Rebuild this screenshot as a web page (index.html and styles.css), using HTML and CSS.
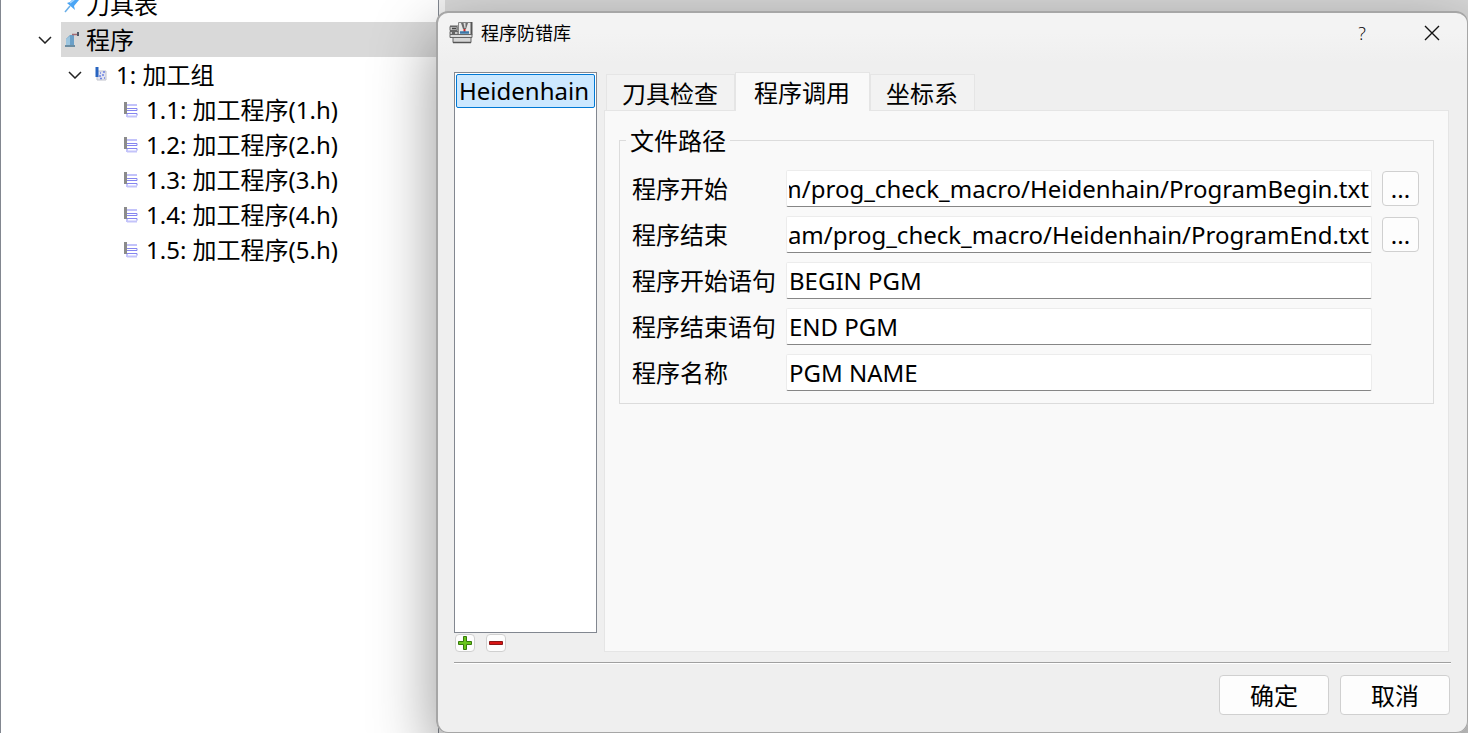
FILE: index.html
```html
<!DOCTYPE html>
<html lang="zh-CN">
<head>
    <meta charset="UTF-8">
    <meta name="viewport" content="width=device-width, initial-scale=1.0">
    <title>程序防错库</title>
    <link rel="stylesheet" href="styles.css">
</head>
<body>
    <svg class="symbols" aria-hidden="true">
        <symbol id="chevron" viewBox="0 0 14 8">
            <path d="M1 1l6 6 6-6" fill="none" stroke="#222" stroke-width="1.5"/>
        </symbol>
        <symbol id="program" viewBox="0 0 16 16">
            <path d="M1.500 0v12" stroke="#8b8b8b" stroke-width="3"/>
            <path d="M3 12v3M3 3h10M3 14.500h10" fill="none" stroke="#c3c3fa" stroke-width="2"/>
            <path d="M3 6.500h10v2H3M3 11.500h10v2" fill="none" stroke="#8585f0"/>
        </symbol>
    </svg>

    <div class="app">
        <div class="tree">
            <div class="row">
                <span class="toggle"></span>
                <div class="item">
                    <svg class="icon" viewBox="0 0 16 16">
                        <path d="M1 15l5-6" stroke="#69aee8" stroke-width="1.5"/>
                        <path d="M3 6l3-1 5-5 4 3-5 6 1 4z" fill="#4aa5f5"/>
                        <path d="M6 6l5-4" stroke="#a5d5ff" stroke-width="1.5"/>
                    </svg>
                    <span>刀具表</span>
                </div>
            </div>
            <div class="row">
                <button class="toggle" aria-label="折叠程序"><svg><use href="#chevron"/></svg></button>
                <div class="item selected">
                    <svg class="icon" viewBox="0 0 16 16">
                        <path d="M2 13V7l4-4h4v10z" fill="#6ba0c8"/>
                        <path d="M2 13V7l4-3v9z" fill="#9cc5df"/>
                        <path d="M1 14h10" stroke="#47738f" stroke-width="1.5"/>
                        <path d="M8 2.500h6" stroke="#a36a72" stroke-width="1.5"/>
                        <path d="M14 0v4" stroke="#4f5968" stroke-width="2"/>
                    </svg>
                    <span>程序</span>
                </div>
            </div>
            <div class="row level-1">
                <button class="toggle" aria-label="折叠加工组"><svg><use href="#chevron"/></svg></button>
                <div class="item">
                    <svg class="icon" viewBox="0 0 16 16">
                        <path d="M3 4h9v9H3z" fill="#e2e4f2" stroke="#c0c2cc"/>
                        <path d="M3 0v10" stroke="#2864c0" stroke-width="3"/>
                        <path d="M6 6h1M9 5h2M5 9h2M8 8h2M10 11h1M6 11.500h2" stroke="#6e83e0" stroke-width="1.5"/>
                    </svg>
                    <span>1: 加工组</span>
                </div>
            </div>
            <div class="row level-2">
                <span class="toggle"></span>
                <div class="item"><svg class="icon"><use href="#program"/></svg><span>1.1: 加工程序(1.h)</span></div>
            </div>
            <div class="row level-2">
                <span class="toggle"></span>
                <div class="item"><svg class="icon"><use href="#program"/></svg><span>1.2: 加工程序(2.h)</span></div>
            </div>
            <div class="row level-2">
                <span class="toggle"></span>
                <div class="item"><svg class="icon"><use href="#program"/></svg><span>1.3: 加工程序(3.h)</span></div>
            </div>
            <div class="row level-2">
                <span class="toggle"></span>
                <div class="item"><svg class="icon"><use href="#program"/></svg><span>1.4: 加工程序(4.h)</span></div>
            </div>
            <div class="row level-2">
                <span class="toggle"></span>
                <div class="item"><svg class="icon"><use href="#program"/></svg><span>1.5: 加工程序(5.h)</span></div>
            </div>
        </div>
        <div class="workspace"></div>
    </div>

    <div class="dialog" role="dialog" aria-labelledby="dialogTitle">
        <div class="titlebar">
            <svg class="machine" viewBox="0 0 24 22">
                <path d="M1 3h9v13H1z" fill="#a8a8a8"/>
                <path d="M1 4.500h7v4H1zM1 9.500h8v3H1z" fill="#c4c4c4" stroke="#666"/>
                <path d="M3 6.500h4M3 11h3" stroke="#444" stroke-width="1.500"/>
                <path d="M9.500.5h13v12h-13z" fill="#e8e8e8" stroke="#888"/>
                <path d="M22.500 0v13" stroke="#555" stroke-width="2"/>
                <path d="M12 1h7l-2 6h-3z" fill="#6a6a6a"/>
                <path d="M14.500 1h2v5h-1z" fill="#ddd"/>
                <path d="M15.500 7v3" stroke="#d02525" stroke-width="2"/>
                <path d="M11 10.500h9" stroke="#3d78a8" stroke-width="2.500"/>
                <path d="M1 12.500h22v3H1z" fill="#dcdcdc" stroke="#666"/>
                <path d="M4 15.500h18v5H4z" fill="#d6d6d6" stroke="#666"/>
                <path d="M4 20.500h18" stroke="#555" stroke-width="1.500"/>
            </svg>
            <span class="title" id="dialogTitle">程序防错库</span>
            <button class="caption" aria-label="帮助">?</button>
            <button class="caption" aria-label="关闭">
                <svg class="close" viewBox="0 0 16 16"><path d="M1 1l14 14M15 1L1 15" stroke="#111" stroke-width="1.4"/></svg>
            </button>
        </div>

        <div class="main">
            <div class="side">
                <ul class="list" role="listbox" aria-label="控制系统">
                    <li role="option" aria-selected="true">Heidenhain</li>
                </ul>
                <div class="tools">
                    <button aria-label="添加">
                        <svg viewBox="0 0 14 14"><path d="M5.500.5h3v5h5v3h-5v5h-3v-5h-5v-3h5z" fill="#69c51b" stroke="#36790b"/></svg>
                    </button>
                    <button aria-label="删除">
                        <svg viewBox="0 0 14 14"><path d="M.5 5.500h13v3H.5z" fill="#d91414" stroke="#8c1515"/></svg>
                    </button>
                </div>
            </div>

            <div class="content">
                <div class="tabs" role="tablist">
                    <button class="tab" role="tab">刀具检查</button>
                    <button class="tab active" role="tab" aria-selected="true">程序调用</button>
                    <button class="tab" role="tab">坐标系</button>
                </div>
                <div class="panel" role="tabpanel">
                    <fieldset>
                        <legend>文件路径</legend>
                        <div class="fields">
                            <label for="beginPath">程序开始</label>
                            <input type="text" class="path" id="beginPath" value="program/prog_check_macro/Heidenhain/ProgramBegin.txt">
                            <button class="browse" aria-label="浏览程序开始">...</button>

                            <label for="endPath">程序结束</label>
                            <input type="text" class="path" id="endPath" value="program/prog_check_macro/Heidenhain/ProgramEnd.txt">
                            <button class="browse" aria-label="浏览程序结束">...</button>

                            <label for="beginText">程序开始语句</label>
                            <input type="text" id="beginText" value="BEGIN PGM">

                            <label for="endText">程序结束语句</label>
                            <input type="text" id="endText" value="END PGM">

                            <label for="progName">程序名称</label>
                            <input type="text" id="progName" value="PGM NAME">
                        </div>
                    </fieldset>
                </div>
            </div>
        </div>

        <div class="footer">
            <button>确定</button>
            <button>取消</button>
        </div>
    </div>

    <script>
        // show the file name end of long paths
        document.querySelectorAll('.path').forEach(function (input) {
            input.scrollLeft = input.scrollWidth;
        });
    </script>
</body>
</html>
```
FILE: styles.css
```css
* {
    box-sizing: border-box;
}
body {
    margin: 0;
    height: 100vh;
    overflow: hidden;
    position: relative;
    font-family: "Noto Sans", "Noto Sans CJK SC", sans-serif;
    font-size: 24px;
    line-height: 34px;
    color: #000;
}
button, input {
    font: inherit;
    color: inherit;
    margin: 0;
    padding: 0;
}
.symbols {
    position: absolute;
    width: 0;
    height: 0;
}

/* main window */
.app {
    display: flex;
    height: 100%;
    background: #f0f0f0;
}
.tree {
    flex: 0 0 439px;
    border: solid #828790;
    border-width: 0 1px;
    background: #fff;
    overflow: hidden;
}
.workspace {
    flex: 1;
    margin-left: 6px;
    background: #d6d6d6;
}
.row {
    display: flex;
    height: 35px;
    padding-left: 30px;
}
/* the list is scrolled, its first row is partly hidden */
.row:first-child {
    margin-top: -13px;
}
.level-1 {
    padding-left: 60px;
}
.level-2 {
    padding-left: 90px;
}
.toggle {
    width: 30px;
    border: 0;
    background: none;
    text-align: left;
    padding-left: 7px;
    line-height: 0;
}
.toggle svg {
    width: 14px;
    height: 8px;
}
.item {
    flex: 1;
    display: flex;
    align-items: center;
    gap: 6px;
    padding-left: 3px;
    white-space: nowrap;
}
.selected {
    background: #d9d9d9;
}
.icon {
    width: 16px;
    height: 16px;
}

/* dialog window */
.dialog {
    position: absolute;
    top: 11px;
    right: 0;
    bottom: 0;
    left: 436px;
    display: flex;
    flex-direction: column;
    border: solid #a6a6a6;
    border-width: 2px 1px 1px 2px;
    border-radius: 12px;
    background: linear-gradient(#f3f3f3 20px, #efefef 50px);
    box-shadow: 0 24px 64px rgba(0, 0, 0, 0.42);
}
.titlebar {
    display: flex;
    align-items: center;
    height: 40px;
    padding-left: 11px;
    font-size: 18px;
}
.machine {
    width: 24px;
    height: 22px;
}
.title {
    flex: 1;
    padding-left: 8px;
}
.caption {
    width: 70px;
    height: 40px;
    border: 0;
    background: none;
    font-family: "Open Sans", sans-serif;
    font-weight: 300;
}
.close {
    display: block;
    width: 16px;
    height: 16px;
    margin: auto;
}
.main {
    flex: 1;
    display: flex;
    gap: 7px;
    padding: 19px 18px 10px 16px;
}
.side {
    flex: 0 0 143px;
    display: flex;
    flex-direction: column;
}
.list {
    flex: 1;
    margin: 0;
    padding: 1px;
    list-style: none;
    border: 1px solid #828790;
    background: #fff;
}
.list li {
    height: 34px;
    line-height: 32px;
    padding: 0 2px;
    border: 1px solid #0078d4;
    border-radius: 2px;
    background: #cce8ff;
}
.tools {
    display: flex;
    gap: 11px;
    padding: 1px 0 0 1px;
}
.tools button {
    width: 20px;
    height: 18px;
    border: 1px solid #d0d0d0;
    border-radius: 4px;
    background: #fdfdfd;
    line-height: 0;
}
.tools svg {
    width: 14px;
    height: 14px;
}
.content {
    flex: 1;
    display: flex;
    flex-direction: column;
}
.tabs {
    display: flex;
    align-items: flex-end;
    height: 38px;
    padding-left: 2px;
}
.tab {
    height: 36px;
    padding: 2px 16px 0 15px;
    border: 1px solid #e5e5e5;
    border-bottom: 0;
    background: #f2f2f2;
}
.tab.active {
    position: relative;
    height: 39px;
    margin-bottom: -1px;
    padding: 1px 19px 0 18px;
    background: #f9f9f9;
}
.panel {
    flex: 1;
    padding: 17px 14px;
    border: 1px solid #e5e5e5;
    background: #f9f9f9;
}
fieldset {
    margin: 0;
    padding: 0 8px 12px 6px;
    border: 1px solid #dcdcdc;
}
legend {
    padding: 1px 4px 0;
    line-height: 24px;
}
.fields {
    display: grid;
    grid-template-columns: max-content 1fr 37px;
    gap: 9px 10px;
    padding: 17px 6px 0;
}
.fields label {
    grid-column: 1;
    line-height: 37px;
}
.fields input {
    min-width: 0;
    height: 37px;
    padding: 0 2px;
    border: 1px solid #ececec;
    border-bottom-color: #868686;
    border-radius: 2px;
    background: #fff;
    outline: 0;
}
.browse {
    height: 35px;
    margin-top: 1px;
    border: 1px solid #d0d0d0;
    border-radius: 4px;
    background: #fdfdfd;
    line-height: 32px;
}
.footer {
    display: flex;
    justify-content: flex-end;
    gap: 11px;
    margin: 0 16px;
    padding: 12px 1px 17px;
    border-top: 1px solid #a0a0a0;
    box-shadow: inset 0 1px #fff;
}
.footer button {
    width: 110px;
    height: 40px;
    padding-top: 2px;
    border: 1px solid #d0d0d0;
    border-radius: 4px;
    background: #fdfdfd;
}
```
